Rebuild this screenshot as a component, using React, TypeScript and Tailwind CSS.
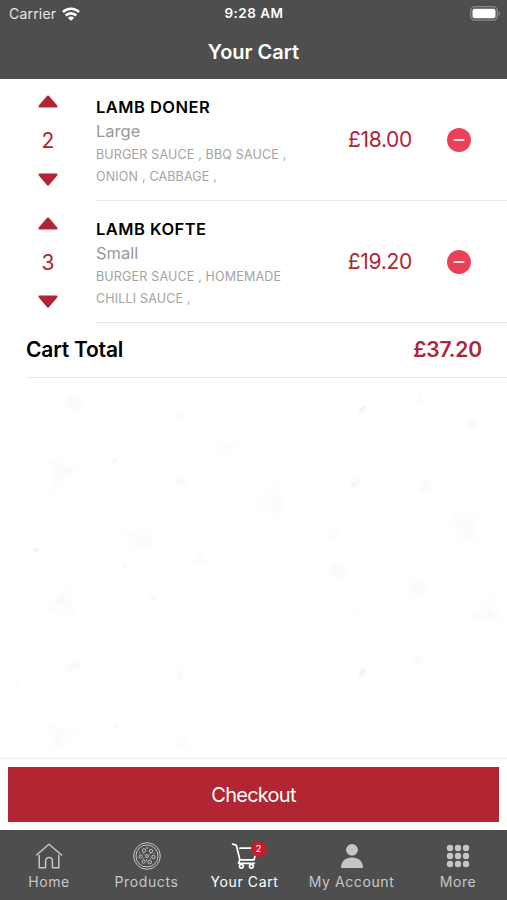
import React from 'react'

interface CartItem {
  id: number
  name: string
  size: string
  extras: string[]
  qty: number
  price: string
}

const items: CartItem[] = [
  { id: 1, name: 'LAMB DONER', size: 'Large', extras: ['BURGER SAUCE , BBQ SAUCE ,', 'ONION , CABBAGE ,'], qty: 2, price: '£18.00' },
  { id: 2, name: 'LAMB KOFTE', size: 'Small', extras: ['BURGER SAUCE , HOMEMADE', 'CHILLI SAUCE ,'], qty: 3, price: '£19.20' },
]

const Icon = {
  wifi: () => (
    <svg className="w-[18px] h-[14px]" viewBox="0 0 18 14" fill="none" stroke="currentColor" strokeWidth={2.6}>
      <path d="M1 5a11.5 11.5 0 0116 0" />
      <path d="M3.7 8.500a7.600 7.600 0 0110.600 0" />
      <path d="M9 13.800L5.900 10.900a4.400 4.400 0 016.200 0z" fill="currentColor" stroke="none" />
    </svg>
  ),
  battery: () => (
    <svg className="w-[31px] h-[15px]" viewBox="0 0 31 15" fill="none">
      <rect x="0.7" y="0.7" width="26.600" height="13.400" rx="4" stroke="#8b8b8b" strokeWidth={1.300} />
      <rect x="2.5" y="2.700" width="23" height="9.600" rx="2" fill="#fff" />
      <path d="M28.700 5.200c1.800.7 1.800 3.800 0 4.500z" fill="#8b8b8b" />
    </svg>
  ),
  up: () => (
    <svg className="w-5 h-[13px]" viewBox="0 0 20 13" fill="currentColor">
      <path d="M8.900.9L.8 10.600c-.6.8-.3 1.800.7 1.800h17c1 0 1.300-1 .7-1.800L11.100.9c-.6-.7-1.600-.7-2.200 0z" />
    </svg>
  ),
  minus: () => (
    <svg className="w-6 h-6" viewBox="0 0 24 24">
      <circle cx="12" cy="12" r="12" fill="#ea4158" />
      <path d="M7.500 12h9" stroke="#ffe1e4" strokeWidth={2} strokeLinecap="round" />
    </svg>
  ),
  home: () => (
    <svg className="w-7 h-7" viewBox="0 0 28 28" fill="none" stroke="currentColor" strokeWidth={1.500} strokeLinejoin="round" strokeLinecap="round">
      <path d="M1.500 13L14 2.300 26.500 13" />
      <path d="M4.200 13.200v12.600h6.400v-7a3.400 3.400 0 016.800 0v7h6.400V13.200" />
    </svg>
  ),
  pizza: () => (
    <svg className="w-7 h-7" viewBox="0 0 28 28" fill="none" stroke="currentColor" strokeWidth={1}>
      <circle cx="14" cy="14" r="13.300" />
      <circle cx="14" cy="14" r="11" />
      <circle cx="11" cy="8.500" r="1.800" />
      <circle cx="18" cy="9" r="1.700" />
      <circle cx="7.600" cy="14.600" r="1.600" />
      <circle cx="14" cy="14" r="1.500" />
      <circle cx="20.400" cy="15" r="1.700" />
      <circle cx="10.600" cy="19.600" r="1.600" />
      <circle cx="16.600" cy="20" r="1.800" />
      <path d="M14.200 5v2M10.300 11.600l1.200 1M16.700 12.300l1-1M13.500 17.300v1.500M6.300 10.500l1 .8M20.500 11.500l1-.4M17 16.200l.8.900M10.400 16.500l.9-.6" />
    </svg>
  ),
  cart: () => (
    <svg className="w-7 h-7" viewBox="0 0 28 28" fill="none" stroke="currentColor" strokeWidth={1.700} strokeLinejoin="round" strokeLinecap="round">
      <path d="M1.600 2.100l3 .7c.5.100.7.400.9.900l3.400 14.100h14.200L25.400 8" />
      <path d="M9 6.200h13" />
      <path d="M8.900 17.800l-1.400 3.500h15.800" />
      <circle cx="10.400" cy="24.200" r="1.900" />
      <circle cx="20.400" cy="24.200" r="1.900" />
    </svg>
  ),
  user: () => (
    <svg className="w-7 h-7" viewBox="0 0 28 28" fill="currentColor">
      <circle cx="14" cy="7.800" r="5.900" />
      <path d="M3 25.600c0-6 4.500-10 11-10s11 4 11 10c0 .3-.2.400-.5.400h-21c-.3 0-.5-.1-.5-.4z" />
    </svg>
  ),
  grid: () => (
    <svg className="w-7 h-7" viewBox="0 0 28 28" fill="currentColor">
      {[6, 14, 22].map((y) => [6, 14, 22].map((x) => <circle key={`${x}-${y}`} cx={x} cy={y} r="3.200" />))}
    </svg>
  ),
}

const tabs = [
  { label: 'Home', icon: Icon.home, width: 'w-[98px]' },
  { label: 'Products', icon: Icon.pizza, width: 'w-[97px]' },
  { label: 'Your Cart', icon: Icon.cart, width: 'w-[99px]', active: true, badge: 2 },
  { label: 'My Account', icon: Icon.user, width: 'w-[115px]' },
  { label: 'More', icon: Icon.grid, width: 'w-[98px]' },
]

// Faint food doodles behind the empty part of the list
const Doodles = () => (
  <svg className="w-full h-full" viewBox="0 0 507 380" fill="#000">
    <g className="blur-[1.5px]" opacity=".009">
      <path d="M45 81l20 3 17 7-15 9-14 17-5-4 4-17zM71 201l3 28 4 12-22-5-15-5 14-12zM276 104l8 14v20l-34-7 18-15zM492 214l6 17 9 15-16-2-26-5 17-8zM46 346l36 5-12 13-18 7-3-15zM222 65h18l-13 15-16-2zM122 149l10 4 22-5v23l-22-1zM450 136l20-4 16 8-8 5 1 16-20 1z" />
    </g>
    <g className="blur-[1.5px]" opacity=".017">
      <circle cx="74" cy="25" r="8" />
      <circle cx="338" cy="193" r="8" />
      <circle cx="418" cy="210" r="8" />
      <circle cx="425" cy="108" r="7" />
      <circle cx="334" cy="155" r="8" opacity=".6" />
      <circle cx="180" cy="39" r="5" />
      <circle cx="472" cy="46" r="5" />
      <circle cx="355" cy="105" r="6" />
      <path d="M62 90l14 2-9 5zM56 225l6-8 2 6-8 5zM486 238l5-7 4 8zM74 282l10 8-18 5-2-4zM176 289l8 8-3 9-8-12zM52 360l12 2-8 7zM412 287l6-13 7 13zM418 10l4 12 3 8-8-5zM200 172l8 15h-16zM178 98l9 3v10l-14-7z" />
      <path d="M12 297l9 6-3 6zM306 74l6 3-6 2zM206 137l6 3-5 4zM470 304l6 3-5 4z" />
      <circle cx="183" cy="364" r="7" opacity=".6" />
      <circle cx="356" cy="232" r="5" opacity=".6" />
    </g>
    <g className="blur-[1px]" opacity=".055">
      <path d="M363 26l3 4-4 4-4 2zM363 289l3 4-4 5-4 1zM148 217l5 2 5-1-4 4zM31 173l6-3 4 2-4 2zM115 80l2 6-5-2zM115 343l3 6-3 1zM124 185l4 2-4 3zM351 105l6 2-5 2z" />
    </g>
  </svg>
)

const CartRow: React.FC<{ item: CartItem }> = ({ item }) => (
  <div className="flex h-[122px]">
    <div className="flex w-24 shrink-0 flex-col items-center justify-between pt-[16px] pb-[15px] text-[#b22434]">
      <button aria-label="Increase">{Icon.up()}</button>
      <span className="text-[21px] leading-6">{item.qty}</span>
      <button className="rotate-180" aria-label="Decrease">{Icon.up()}</button>
    </div>
    <div className="flex grow border-b border-[#e9e9e9]">
      <div className="w-[216px] shrink-0 pt-[16px]">
        <h2 className="text-[16.5px] leading-6 font-semibold tracking-[0.47px] text-black">{item.name}</h2>
        <p className="text-[16.5px] leading-[25px] text-[#999]">{item.size}</p>
        {item.extras.map((line) => (
          <p key={line} className="text-[12.500px] leading-[22px] tracking-[0.18px] whitespace-nowrap text-[#a3a3a3]">{line}</p>
        ))}
      </div>
      <div className="flex w-[100px] items-center justify-end text-[21px] tracking-[-0.3px] text-[#b22434]">{item.price}</div>
      <button className="ml-[35px] flex items-center" aria-label="Remove">{Icon.minus()}</button>
    </div>
  </div>
)

export default function App() {
  return (
    <div className="flex h-[900px] w-[507px] flex-col overflow-hidden bg-white font-['Inter',sans-serif]">
      <header className="h-[79px] shrink-0 bg-[#4e4e4e] text-white">
        <div className="grid h-[27px] grid-cols-3 items-center pr-[6px] pl-[9px] text-[14px]">
          <div className="flex items-center gap-[6px] text-[#e8e8e8]">
            <span className="tracking-[0.2px]">Carrier</span>
            <span className="text-white">{Icon.wifi()}</span>
          </div>
          <div className="pr-[2px] text-center text-[13.500px] font-semibold tracking-[0.5px]">9:28 AM</div>
          <div className="flex justify-end">{Icon.battery()}</div>
        </div>
        <h1 className="text-center text-[20px] leading-[51px] font-semibold">Your Cart</h1>
      </header>

      <main className="flex grow flex-col">
        {items.map((item) => (
          <CartRow key={item.id} item={item} />
        ))}
        <div className="ml-[26px] flex h-[55px] items-center justify-between border-b border-[#e9e9e9] pr-[25px] text-[21px] font-semibold">
          <span className="tracking-[-0.2px] text-black">Cart Total</span>
          <span className="tracking-[-0.15px] text-[#b22434]">£37.20</span>
        </div>
        <div className="h-[380px]">
          <Doodles />
        </div>
      </main>

      <div className="h-[72px] shrink-0 border-t border-[#ececec] px-2 pt-2">
        <button className="h-[55px] w-full bg-[#b22532] text-[20px] tracking-[-0.75px] text-white">Checkout</button>
      </div>

      <nav className="flex h-[70px] shrink-0 bg-[#4e4e4e] pt-[12px]">
        {tabs.map((tab) => (
          <a key={tab.label} className={`flex shrink-0 flex-col items-center ${tab.width} ${tab.active ? 'text-white' : 'text-[#c6c6c6]'}`}>
            <span className="relative">
              {tab.icon()}
              {tab.badge && (
                <span className="absolute -top-[1px] left-[20px] flex h-4 w-4 items-center justify-center rounded-full bg-[#c01f31] text-[9.500px] text-white">
                  {tab.badge}
                </span>
              )}
            </span>
            <span className="text-[14px] leading-[23px] tracking-[0.6px] whitespace-nowrap">{tab.label}</span>
          </a>
        ))}
      </nav>
    </div>
  )
}
